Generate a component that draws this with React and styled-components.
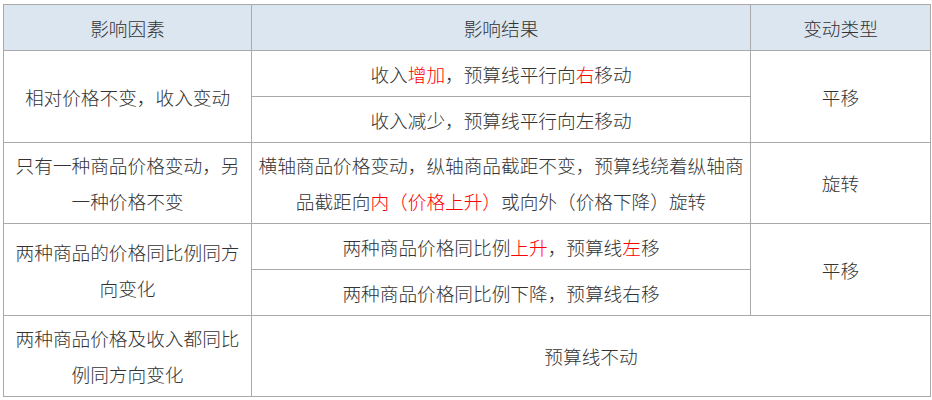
import styled, { createGlobalStyle } from "styled-components";

const GlobalStyle = createGlobalStyle`
  body {
    margin: 0;
    background: #fff;
  }
`;

const Page = styled.div`
  padding: 4px 0 0 3px;
`;

const Table = styled.table`
  width: 927px;
  table-layout: fixed;
  border-collapse: collapse;
  font-family: "Noto Sans CJK SC", "Noto Sans", sans-serif;
  font-size: 18.67px;
  font-weight: 300;
  line-height: 36px;
  color: #333;
`;

const Row = styled.tr`
  height: ${(p) => (p.$tall ? "81px" : "46px")};
`;

const HeadCell = styled.th`
  background: #dce6f0;
  border: 1px solid #aaa;
  font-weight: 300;
  text-align: center;
  padding: 0 5px;
`;

const Cell = styled.td`
  border: 1px solid #aaa;
  text-align: center;
  vertical-align: middle;
  padding: 0 5px;
`;

const Red = styled.span`
  color: #ff0000;
`;

function App() {
  return (
    <>
      <GlobalStyle />
      <Page>
        <Table>
          <colgroup>
            <col style={{ width: 248 }} />
            <col style={{ width: 499 }} />
            <col style={{ width: 180 }} />
          </colgroup>
          <thead>
            <Row>
              <HeadCell>影响因素</HeadCell>
              <HeadCell>影响结果</HeadCell>
              <HeadCell>变动类型</HeadCell>
            </Row>
          </thead>
          <tbody>
            <Row>
              <Cell rowSpan={2}>相对价格不变，收入变动</Cell>
              <Cell>
                收入<Red>增加</Red>，预算线平行向<Red>右</Red>移动
              </Cell>
              <Cell rowSpan={2}>平移</Cell>
            </Row>
            <Row>
              <Cell>收入减少，预算线平行向左移动</Cell>
            </Row>
            <Row $tall>
              <Cell>只有一种商品价格变动，另一种价格不变</Cell>
              <Cell>
                横轴商品价格变动，纵轴商品截距不变，预算线绕着纵轴商品截距向
                <Red>内（价格上升）</Red>或向外（价格下降）旋转
              </Cell>
              <Cell>旋转</Cell>
            </Row>
            <Row>
              <Cell rowSpan={2}>两种商品的价格同比例同方向变化</Cell>
              <Cell>
                两种商品价格同比例<Red>上升</Red>，预算线<Red>左</Red>移
              </Cell>
              <Cell rowSpan={2}>平移</Cell>
            </Row>
            <Row>
              <Cell>两种商品价格同比例下降，预算线右移</Cell>
            </Row>
            <Row $tall>
              <Cell>两种商品价格及收入都同比例同方向变化</Cell>
              <Cell colSpan={2}>预算线不动</Cell>
            </Row>
          </tbody>
        </Table>
      </Page>
    </>
  );
}

export default App;
